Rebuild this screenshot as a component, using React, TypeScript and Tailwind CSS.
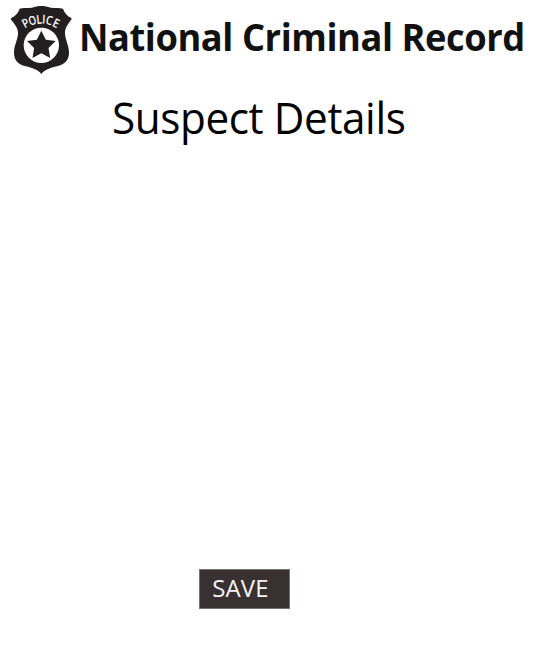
const letters = [
  { glyph: "P", place: "translate(83 81) rotate(-28) scale(.85 1)" },
  { glyph: "O", place: "translate(101 74) rotate(-17) scale(.78 1)" },
  { glyph: "L", place: "translate(119 71) rotate(-6) scale(.85 1)" },
  { glyph: "I", place: "translate(131 71) rotate(3) scale(.85 1)" },
  { glyph: "C", place: "translate(145 74) rotate(14) scale(.85 1)" },
  { glyph: "E", place: "translate(163 81) rotate(26) scale(.88 1)" },
];

function PoliceBadge() {
  return (
    <svg className="h-20 w-[78px] shrink-0" viewBox="0 0 234 240" role="img" aria-label="Police">
      <path
        fill="#231f20"
        d="M124 18 C133 18 143 20 152 23 C166 24 180 23 189 26 C193 39 202 48 214 54 Q216 57 213 60 C202 74 194 87 195 101 C196 120 207 136 207 158 C207 181 193 193 171 199 C151 204 135 208 124 222 C113 208 97 204 77 199 C55 193 42 181 42 158 C42 136 53 120 54 101 C55 87 46 74 34 60 Q31 57 34 54 C46 48 55 39 59 26 C67 23 80 24 96 23 C105 20 115 18 124 18Z"
      />
      <circle cx="124" cy="136" r="53" fill="white" />
      <path fill="#231f20" d="M124 92L137.500 119L167 123L145.500 144L150.500 174L124 160L97.500 174L102.500 144L81 123L110.500 119Z" />
      <g fill="white" textAnchor="middle" className="font-['Open_Sans',sans-serif] text-[37px] font-semibold">
        {letters.map(({ glyph, place }) => <text key={glyph} transform={place}>{glyph}</text>)}
      </g>
    </svg>
  );
}

export default function App() {
  return (
    <main className="flex h-[654px] w-[542px] flex-col items-start overflow-hidden bg-white font-['Open_Sans','Noto_Sans',sans-serif]">
      <header className="flex h-20 w-full">
        <PoliceBadge />
        <h1 className="mt-[10px] ml-px w-[463px] origin-left scale-x-[0.954] whitespace-nowrap text-[38px] leading-[52px] font-bold tracking-[-0.45px] text-[#111111]">National Criminal Record</h1>
      </header>
      <h2 className="mt-2 ml-[112px] origin-left scale-x-[0.982] whitespace-nowrap text-[43px] leading-[60px] font-normal tracking-[-0.4px] text-black">Suspect Details</h2>
      <button type="button" className="mt-[421px] ml-[199px] h-10 w-[91px] border border-[#777172] bg-[#393031] pr-2 pb-1 text-2xl leading-[35px] tracking-[0.1px] text-[#f8f5f5]">SAVE</button>
    </main>
  );
}
